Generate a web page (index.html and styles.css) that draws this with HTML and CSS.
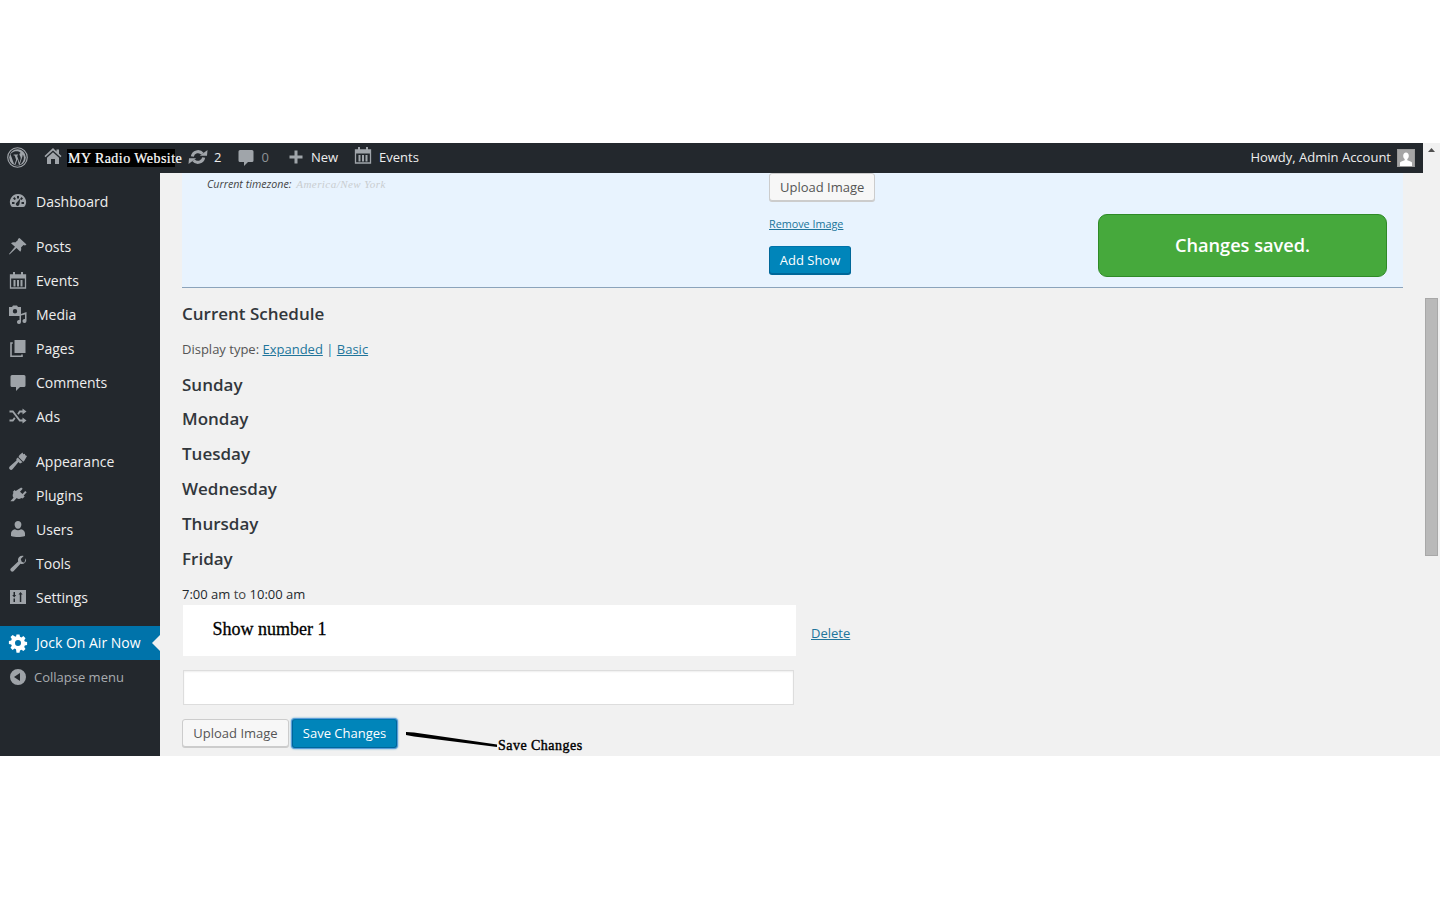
FILE: index.html
```html
<!DOCTYPE html>
<html lang="en">
<head>
<meta charset="utf-8">
<title>Jock On Air Now</title>
<link rel="stylesheet" href="styles.css">
</head>
<body>
<div class="frame">
  <div class="window">
    <header class="adminbar">
      <div class="bar-left">
        <svg class="wp-logo" viewBox="0 0 20 20"><circle cx="10" cy="10" r="9.3" fill="none" stroke="#a0a5aa" stroke-width="1.1"/><circle cx="10" cy="10" r="7.9" fill="#a0a5aa"/><path fill="#23282d" d="M3.3 6.8 7 17l1.7-4.9-1.4-4-1-.1v-.8h4.2v.8l-1 .1 2.4 7 .8-2.7c.5-1.400.4-2.300.1-3.200-.4-1.100-1-1.500-1-2.300 0-.7.5-1.200 1.200-1.300C11 3.800 8.500 3.900 6.500 4.500 5.200 5 4 5.800 3.300 6.800Zm11.700.3c0 1.200-.3 2-.7 3.200l-2.300 6.600c2.700-1.300 4.400-4.300 4-7.400-.1-.9-.5-1.800-1-2.400Zm-5 4.600-2.200 5.600c1 .4 2.400.5 3.700.2Z"/></svg>
        <svg class="bar-home" viewBox="0 0 20 20"><path fill="#a0a5aa" d="M10 2 1.500 10l1 1.200L10 4.500l7.500 6.700 1-1.200-2.500-2.300V3.500h-2.500v1.900Z"/><path fill="#a0a5aa" d="M10 6.300 4 11.700V18h4v-5h4v5h4v-6.300Z"/></svg>
        <span class="site-name">MY Radio Website</span>
        <span class="bar-item bar-updates">
          <svg class="bar-icon" viewBox="0 0 20 20"><path fill="none" stroke="#a0a5aa" stroke-width="3" d="M4.300 9.500A5.800 5.800 0 0 1 14.500 6.800M15.700 10.500A5.800 5.800 0 0 1 5.500 13.200"/><path fill="#a0a5aa" d="M11.800 8.800h7.200L19.500 3ZM8.200 11.200H1L.5 17Z"/></svg>
          <span>2</span>
        </span>
        <span class="bar-item bar-comments">
          <svg class="bar-icon" viewBox="0 0 20 20"><path fill="#a0a5aa" d="M4 3h12a1.500 1.500 0 0 1 1.500 1.500v9A1.500 1.500 0 0 1 16 15h-4l-4 4v-4H4a1.500 1.500 0 0 1-1.500-1.500v-9A1.500 1.500 0 0 1 4 3Z"/></svg>
          <span class="muted-count">0</span>
        </span>
        <span class="bar-item bar-new">
          <svg class="bar-icon" viewBox="0 0 20 20"><path fill="#a0a5aa" d="M8.500 3.500h3v5h5v3h-5v5h-3v-5h-5v-3h5Z"/></svg>
          <span>New</span>
        </span>
        <span class="bar-item bar-events">
          <svg class="bar-icon" viewBox="0 0 20 20"><path fill="none" stroke="#a0a5aa" stroke-width="1.300" d="M2.500 5h15v13h-15Z"/><path fill="#a0a5aa" d="M2.500 5h15v3.500h-15ZM5 2h2v4H5Zm8 0h2v4h-2ZM5.500 10h2v6.500h-2Zm3.500 0h2v6.500H9Zm3.500 0h2v6.500h-2Z"/></svg>
          <span>Events</span>
        </span>
      </div>
      <div class="bar-right">
        <span>Howdy, Admin Account</span>
        <span class="avatar"><svg viewBox="0 0 16 16"><path fill="#fff" d="M8 2.500c1.700 0 2.800 1.400 2.800 3.200 0 1.400-.6 2.700-1.500 3.400v1.200c1.800.6 3.700 1.400 4.700 2.200V16H2v-3.500c1-.8 2.900-1.600 4.700-2.200V9.100c-.9-.7-1.500-2-1.500-3.400C5.200 3.900 6.300 2.500 8 2.500Z"/></svg></span>
      </div>
    </header>

    <div class="workspace">
      <nav class="sidebar">
        <ul class="menu">
          <li class="menu-item"><svg class="menu-icon" viewBox="0 0 20 20"><path fill="#9ea3a8" fill-rule="evenodd" d="M10 3a8 8 0 0 1 7 12c-.4.700-1 1-1.800 1H4.800c-.8 0-1.400-.3-1.800-1A8 8 0 0 1 10 3ZM9 5v2.500h2V5Zm-4 2.500L6.500 9 8 8 6.500 6ZM15 7.500 13.500 6 12 8l1.500 1ZM4 11v2h2.500v-2Zm9.500 0v2H16v-2Zm-1.200-3.500-3.500 4a1.800 1.800 0 1 0 2.600 1.800Z"/></svg><span>Dashboard</span></li>
          <li class="menu-item gap-before"><svg class="menu-icon" viewBox="0 0 20 20"><path fill="#9ea3a8" d="M11.500 2 18.500 8.500l-1.500 1-1.500-.5-2.500 2.500c.5 1.700.2 3.200-.7 4.200L8.500 12 1.500 18.500l-.5-.5L7 10.800 3 7.200c1-.9 2.700-1.200 4.200-.7l2.800-2.500-.2-1Z"/></svg><span>Posts</span></li>
          <li class="menu-item"><svg class="menu-icon" viewBox="0 0 20 20"><path fill="none" stroke="#9ea3a8" stroke-width="1.300" d="M2.500 5h15v13h-15Z"/><path fill="#9ea3a8" d="M2.500 5h15v3.500h-15ZM5 2h2v4H5Zm8 0h2v4h-2ZM5.500 10h2v6.500h-2Zm3.500 0h2v6.500H9Zm3.500 0h2v6.500h-2Z"/></svg><span>Events</span></li>
          <li class="menu-item"><svg class="menu-icon" viewBox="0 0 20 20"><path fill="#9ea3a8" fill-rule="evenodd" d="M1 3h3l1-1.500h4L10 3h3v9H1ZM7 5a2.200 2.200 0 1 0 0 4.400A2.200 2.200 0 0 0 7 5Z"/><path fill="#9ea3a8" d="M18.500 8v9a2 2 0 1 1-1.500-2V10.500l-4 1V18a2 2 0 1 1-1.500-2v-5.500l1.500-.4Z"/></svg><span>Media</span></li>
          <li class="menu-item"><svg class="menu-icon" viewBox="0 0 20 20"><path fill="#9ea3a8" d="M6.500 2h11v13h-11Z"/><path fill="none" stroke="#9ea3a8" stroke-width="1.600" d="M4.800 5H3v13.200h11v-1.700"/></svg><span>Pages</span></li>
          <li class="menu-item"><svg class="menu-icon" viewBox="0 0 20 20"><path fill="#9ea3a8" d="M4 3h12a1.500 1.500 0 0 1 1.500 1.500v9A1.500 1.500 0 0 1 16 15h-4l-4 4v-4H4a1.500 1.500 0 0 1-1.500-1.500v-9A1.500 1.500 0 0 1 4 3Z"/></svg><span>Comments</span></li>
          <li class="menu-item"><svg class="menu-icon" viewBox="0 0 20 20"><path fill="none" stroke="#9ea3a8" stroke-width="1.800" d="M1.500 5.500h3.300l7 9h3.200M1.500 14.500h3.300l2-2.600M10 8.200l1.800-2.700h3.200"/><path fill="#9ea3a8" d="M14.500 2.500 18.500 5.500l-4 3ZM14.500 11.500l4 3-4 3Z"/></svg><span>Ads</span></li>
          <li class="menu-item gap-before"><svg class="menu-icon" viewBox="0 0 20 20"><path fill="#9ea3a8" d="M11.500 4 14.500 1.500l.8 1.700 1.500-.5.500 1.500 1.700.8-2.500 4.500-1.200 1.200-4.800-4.800ZM9.800 6.500l4.700 4.700-2.500 1.300-1.500-1.500L4.500 18.300a1.800 1.800 0 0 1-2.800-2.800L8.500 9.500 8.300 8Z"/></svg><span>Appearance</span></li>
          <li class="menu-item"><svg class="menu-icon" viewBox="0 0 20 20"><path fill="#9ea3a8" d="M13.200 2.500l1.500 1.300-2.700 3 2.500 2.200 2.700-3 1.500 1.300-3 3.300 1 1-2 2-1-.5c-1.500 1-3.500 1.200-5 0l-3 3.200H2.500V16l3-3.200c-1.200-1.500-1-3.500 0-5L4.700 7l2-2 1 1Z"/></svg><span>Plugins</span></li>
          <li class="menu-item"><svg class="menu-icon" viewBox="0 0 20 20"><path fill="#9ea3a8" d="M10 2c2 0 3.400 1.500 3.400 3.500S12 9.800 10 9.800 6.600 7.500 6.600 5.500 8 2 10 2Zm-3 8.300c1.800 1.200 4.200 1.200 6 0 2.300.6 4 2 4 4.200V17c-4 1.300-10 1.300-14 0v-2.500c0-2.200 1.700-3.600 4-4.200Z"/></svg><span>Users</span></li>
          <li class="menu-item"><svg class="menu-icon" viewBox="0 0 20 20"><path fill="#9ea3a8" d="M17.800 5.200c.6 1.500.3 3.300-.9 4.500-1.200 1.200-2.900 1.500-4.400 1l-7 7.500a2 2 0 0 1-2.800-2.800l7.500-7c-.5-1.500-.2-3.200 1-4.400 1.200-1.200 3-1.500 4.500-.9l-3 3 1 2.600 2.600 1Z"/></svg><span>Tools</span></li>
          <li class="menu-item"><svg class="menu-icon" viewBox="0 0 20 20"><path fill="#9ea3a8" fill-rule="evenodd" d="M2 3h16v14H2ZM5.500 5v3H4.200l2 2.500 2-2.500H7V5ZM12.500 5l-2 2.500h1.300V15h1.500V7.500h1.300ZM5.500 11.500V15H7v-3.500Z"/></svg><span>Settings</span></li>
          <li class="menu-item current"><svg class="menu-icon" viewBox="0 0 20 20"><path fill="#fff" fill-rule="evenodd" d="M8.500 1.500h3l.5 2.300 1.400.6 2-1.300 2.100 2.100-1.300 2 .6 1.400 2.300.5v3l-2.300.5-.6 1.400 1.300 2-2.100 2.100-2-1.300-1.400.6-.5 2.300h-3L8 16.200l-1.400-.6-2 1.300-2.100-2.100 1.300-2-.6-1.400-2.300-.5v-3l2.300-.5.600-1.400-1.300-2 2.100-2.100 2 1.300L8 3.800ZM10 7a3 3 0 1 0 0 6 3 3 0 0 0 0-6Z"/></svg><span class="current-label">Jock On Air Now</span></li>
          <li class="menu-item collapse"><svg class="menu-icon" viewBox="0 0 20 20"><path fill="#9ea3a8" fill-rule="evenodd" d="M10 2a8 8 0 1 1 0 16 8 8 0 0 1 0-16Zm2 4-6 4 6 4Z"/></svg><span>Collapse menu</span></li>
        </ul>
      </nav>

      <main class="content">
        <section class="add-panel">
          <div class="panel-left">
            <p class="timezone"><em>Current timezone:</em> <span class="tz-value">America/New York</span></p>
          </div>
          <div class="panel-actions">
            <button class="btn" type="button">Upload Image</button>
            <a class="remove-link" href="#">Remove Image</a>
            <button class="btn btn-primary btn-add" type="button">Add Show</button>
          </div>
        </section>

        <h2 class="schedule-title">Current Schedule</h2>
        <p class="display-type">Display type: <a href="#">Expanded</a> <span class="pipe">|</span> <a href="#">Basic</a></p>

        <h3 class="day">Sunday</h3>
        <h3 class="day">Monday</h3>
        <h3 class="day">Tuesday</h3>
        <h3 class="day">Wednesday</h3>
        <h3 class="day">Thursday</h3>
        <h3 class="day">Friday</h3>

        <p class="slot-time"><b>7:00 am</b> to <b>10:00 am</b></p>
        <div class="show-row">
          <div class="show-name">Show number 1</div>
          <a class="delete-link" href="#">Delete</a>
        </div>
        <input class="show-input" type="text" aria-label="Show notes">
        <div class="form-actions">
          <button class="btn btn-upload" type="button">Upload Image</button>
          <button class="btn btn-primary btn-focus" type="button">Save Changes</button>
        </div>
      </main>
    </div>

    <div class="notice">Changes saved.</div>
    <svg class="callout-line" viewBox="0 0 92 16"><path fill="#000" d="M0 0 8 .5 91 12.500v2.500L8 4.500 0 3Z"/></svg>
    <span class="callout-text">Save Changes</span>
  </div>

  <aside class="scrollbar">
    <svg class="scroll-arrow" viewBox="0 0 7 4"><path fill="#505050" d="M3.500 0 7 4H0Z"/></svg>
    <div class="scroll-thumb"></div>
  </aside>
</div>
</body>
</html>
```
FILE: styles.css
```css
* { box-sizing: border-box; }
html, body { margin: 0; padding: 0; background: #fff; }
body {
  height: 900px;
  padding-top: 143px;
  overflow: hidden;
  font-family: "Open Sans", sans-serif;
  font-size: 13px;
  color: #444;
}
a { color: #21759b; }
.frame { display: flex; height: 613px; background: #f1f1f1; overflow: hidden; }
.window { position: relative; flex: 1; min-width: 0; display: flex; flex-direction: column; }

.adminbar {
  flex: none; height: 30px; background: #23282d; color: #eee;
  display: flex; justify-content: space-between; align-items: center;
  padding: 0 8px 2px 7px; font-size: 13px;
}
.bar-left, .bar-right, .bar-item { display: flex; align-items: center; }
.wp-logo { width: 21px; height: 21px; }
.bar-home { width: 20px; height: 20px; margin: -2px 0 0 15px; }
.site-name {
  margin: 1px 0 0 4px; width: 108px; height: 18px; background: #000; color: #fff;
  font: 400 14px/20px "Liberation Serif", serif; letter-spacing: .45px;
  padding-left: 1px; white-space: nowrap; -webkit-text-stroke: .2px #fff;
}
.bar-icon { width: 20px; height: 20px; flex: none; }
.bar-updates { margin-left: 13px; gap: 6px; }
.bar-comments { margin-left: 15px; gap: 5px; }
.muted-count { color: #8d9296; }
.bar-new { margin-left: 17px; gap: 5px; }
.bar-events { margin-left: 15px; gap: 6px; }
.bar-events .bar-icon { margin-top: -4px; }
.bar-right { gap: 6px; }
.avatar { width: 18px; height: 18px; background: #a5a5a5; border: 1px solid #999; display: block; margin-top: 2px; }
.avatar svg { display: block; width: 16px; height: 16px; }

.workspace { flex: 1; min-height: 0; display: flex; }
.sidebar { flex: none; width: 160px; background: #23282d; padding-top: 11px; }
.menu { list-style: none; margin: 0; padding: 0; }
.menu-item {
  position: relative; height: 34px; display: flex; align-items: center;
  padding-left: 8px; color: #eee; font-size: 14px; gap: 8px;
}
.menu-icon { width: 20px; height: 20px; flex: none; }
.gap-before { margin-top: 11px; }
.current { margin-top: 12px; background: #0073aa; color: #fff; }
.current-label { margin-top: -2px; }
.current::after {
  content: ""; position: absolute; right: 0; top: 9px;
  border: 8px solid transparent; border-left-width: 0; border-right-color: #f1f1f1;
}
.collapse { color: #a8acb0; font-size: 13px; gap: 6px; }

.content { flex: 1; min-width: 0; padding: 0 20px 0 22px; overflow: hidden; }
.add-panel {
  height: 115px; background: #e8f3fe; border-bottom: 1px solid #8ba3bb;
  display: flex; padding-left: 25px;
}
.panel-left { width: 562px; }
.timezone { margin: 4px 0 0; font-size: 10.700px; line-height: 14px; color: #444; }
.tz-value { font-family: "Liberation Serif", serif; font-style: italic; color: #c9cdd0; font-size: 11px; margin-left: 2px; letter-spacing: .45px; }
.panel-actions { display: flex; flex-direction: column; align-items: flex-start; }
.btn {
  height: 28px; padding: 0 10px; border: 1px solid #ccc; border-radius: 3px;
  background: #f7f7f7; color: #555; font: 13px/24px "Open Sans", sans-serif;
  box-shadow: 0 1px 0 #ccc; white-space: nowrap;
}
.btn-primary {
  background: #0085ba; border-color: #0073aa #006799 #006799; color: #fff;
  box-shadow: 0 1px 0 #006799;
}
.remove-link { margin-top: 15px; font-size: 10.800px; line-height: 15px; }
.btn-add { margin-top: 15px; width: 82px; padding: 0; }

.schedule-title { margin: 15px 0 0; font-size: 17px; font-weight: 600; line-height: 22px; color: #32373c; }
.display-type { margin: 14px 0 0; line-height: 20px; color: #555; }
.pipe { color: #21759b; }
.day { margin: 13.800px 0 0; font-size: 17px; font-weight: 600; line-height: 21px; color: #32373c; height: 21px; }
.display-type + .day { margin-top: 14.600px; }
.slot-time { margin: 16.400px 0 0; line-height: 18px; color: #444; }
.slot-time b { font-weight: 400; color: #23282d; }
.show-row { display: flex; align-items: center; margin: 2px 0 0 1px; }
.show-name {
  width: 613px; height: 51px; background: #fff; padding-left: 29.500px;
  font: 400 18px/49px "Liberation Serif", serif; color: #000;
  -webkit-text-stroke: .3px #000;
}
.delete-link { margin: 6px 0 0 15px; }
.show-input {
  display: block; width: 611px; height: 35px; margin: 14px 0 0 1px;
  background: #fff; border: 1px solid #ddd; box-shadow: inset 0 1px 2px rgba(0,0,0,.07);
}
.form-actions { display: flex; gap: 3px; margin-top: 14px; }
.btn-upload { width: 107px; padding: 0; }
.btn-focus { width: 105px; height: 29px; padding: 0; box-shadow: 0 0 0 1px #5b9dd9, 0 0 2px 1px rgba(30,140,190,.8); }

.notice {
  position: absolute; left: 1098px; top: 71px; width: 289px; height: 63px;
  background: #46a93c; border: 1px solid #2f8a27; border-radius: 9px;
  color: #fff; font-size: 18.200px; font-weight: 600; line-height: 61px; text-align: center;
}
.callout-line { position: absolute; left: 406px; top: 589px; width: 92px; height: 16px; }
.callout-text {
  position: absolute; left: 498px; top: 594px;
  font: 400 14px/18px "Liberation Serif", serif; color: #000; letter-spacing: .47px; white-space: nowrap;
  -webkit-text-stroke: .4px #000;
}

.scrollbar { flex: none; width: 17px; display: flex; flex-direction: column; align-items: center; background: #f1f1f1; }
.scroll-arrow { width: 7px; height: 4px; margin-top: 5px; flex: none; }
.scroll-thumb {
  margin-top: 146px; width: 13px; height: 258px; flex: none;
  background: #b9b9b9; border: 1px solid #a8a8a8;
}
```
